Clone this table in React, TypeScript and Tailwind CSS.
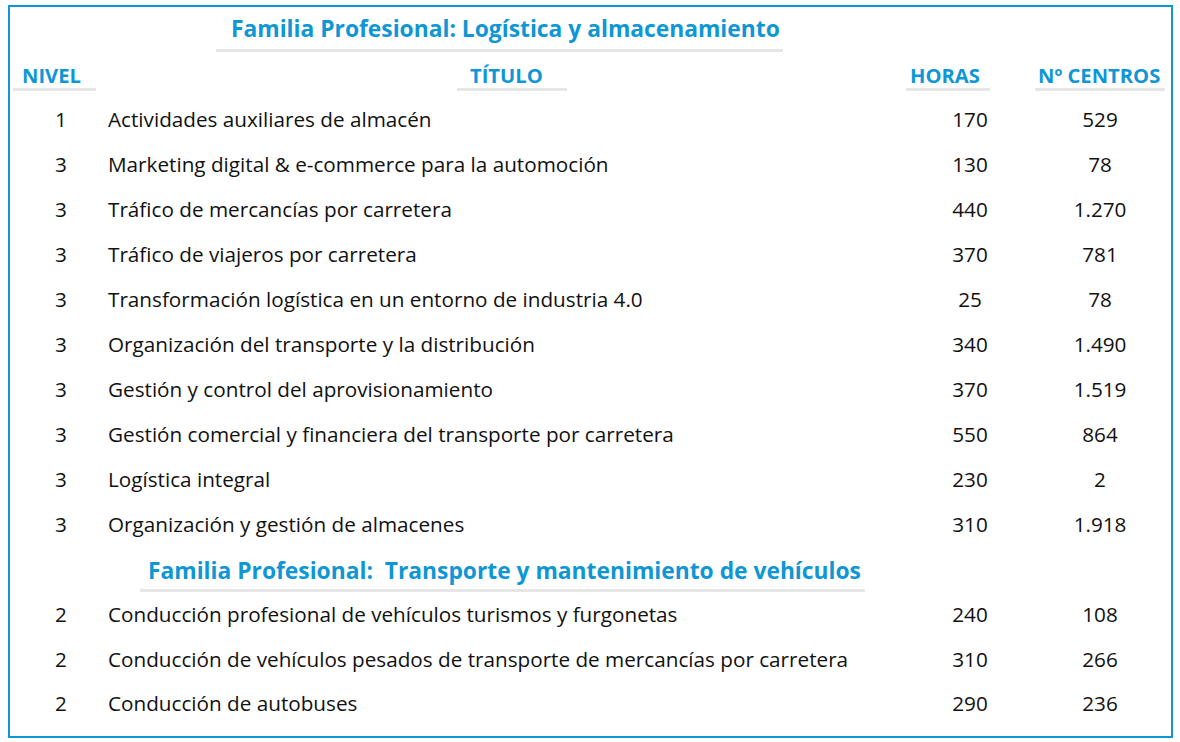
import React from "react";

const rows1: [string, string, string, string][] = [
  ["1", "Actividades auxiliares de almacén", "170", "529"],
  ["3", "Marketing digital & e-commerce para la automoción", "130", "78"],
  ["3", "Tráfico de mercancías por carretera", "440", "1.270"],
  ["3", "Tráfico de viajeros por carretera", "370", "781"],
  ["3", "Transformación logística en un entorno de industria 4.0", "25", "78"],
  ["3", "Organización del transporte y la distribución", "340", "1.490"],
  ["3", "Gestión y control del aprovisionamiento", "370", "1.519"],
  ["3", "Gestión comercial y financiera del transporte por carretera", "550", "864"],
  ["3", "Logística integral", "230", "2"],
  ["3", "Organización y gestión de almacenes", "310", "1.918"],
];

const rows2: [string, string, string, string][] = [
  ["2", "Conducción profesional de vehículos turismos y furgonetas", "240", "108"],
  ["2", "Conducción de vehículos pesados de transporte de mercancías por carretera", "310", "266"],
  ["2", "Conducción de autobuses", "290", "236"],
];

function Row({ r, h = "h-[45px]" }: { r: [string, string, string, string]; h?: string }) {
  return (
    <div className={`flex items-center ${h} text-[20.7px] text-[#111]`}>
      <div className="w-[98px] pl-[4px] text-center">{r[0]}</div>
      <div className="w-[792px] whitespace-nowrap">{r[1]}</div>
      <div className="w-[140px] text-center">{r[2]}</div>
      <div className="w-[120px] text-center">{r[3]}</div>
    </div>
  );
}

export default function App() {
  return (
    <div className="w-[1180px] h-[742px] bg-white pl-[8px] pt-[5px]" style={{ fontFamily: "'Open Sans', sans-serif" }}>
      <div className="w-[1165px] h-[733px] border-2 border-[#0e96d5] flex flex-col">
        {/* Title 1 */}
        <div className="flex pt-[8px]">
          <div className="ml-[206px] w-[567px] pl-[15px] h-[37px] leading-[28px] pb-[6px] border-b-[3px] border-[#e6e6e6] text-[22.8px] font-bold text-[#0e96d5] whitespace-nowrap">
            Familia Profesional: Logística y almacenamiento
          </div>
        </div>
        {/* Headers */}
        <div className="flex mt-[10px] text-[20.2px] font-bold text-[#0e96d5] leading-[26px]">
          <div className="ml-[3px] w-[83px] pl-[9px] border-b-[3px] border-[#e6e6e6]">NIVEL</div>
          <div className="ml-[361px] w-[110px] pl-[13px] border-b-[3px] border-[#e6e6e6]">TÍTULO</div>
          <div className="ml-[339px] w-[84px] pl-[4px] border-b-[3px] border-[#e6e6e6]">HORAS</div>
          <div className="ml-[45px] w-[130px] pl-[3px] border-b-[3px] border-[#e6e6e6] whitespace-nowrap">Nº CENTROS</div>
        </div>
        <div className="mt-[6px]">
          {rows1.map((r, i) => (
            <Row key={i} r={r} />
          ))}
        </div>
        {/* Title 2 */}
        <div className="flex pt-[10px]">
          <div className="ml-[130px] w-[725px] pl-[8px] h-[35px] leading-[28px] pb-[4px] border-b-[3px] border-[#e6e6e6] text-[22.8px] font-bold text-[#0e96d5] whitespace-pre">
            {"Familia Profesional:  Transporte y mantenimiento de vehículos"}
          </div>
        </div>
        <div>
          {rows2.map((r, i) => (
            <Row key={i} r={r} h={i === 2 ? "h-[44px]" : "h-[45px]"} />
          ))}
        </div>
      </div>
    </div>
  );
}
